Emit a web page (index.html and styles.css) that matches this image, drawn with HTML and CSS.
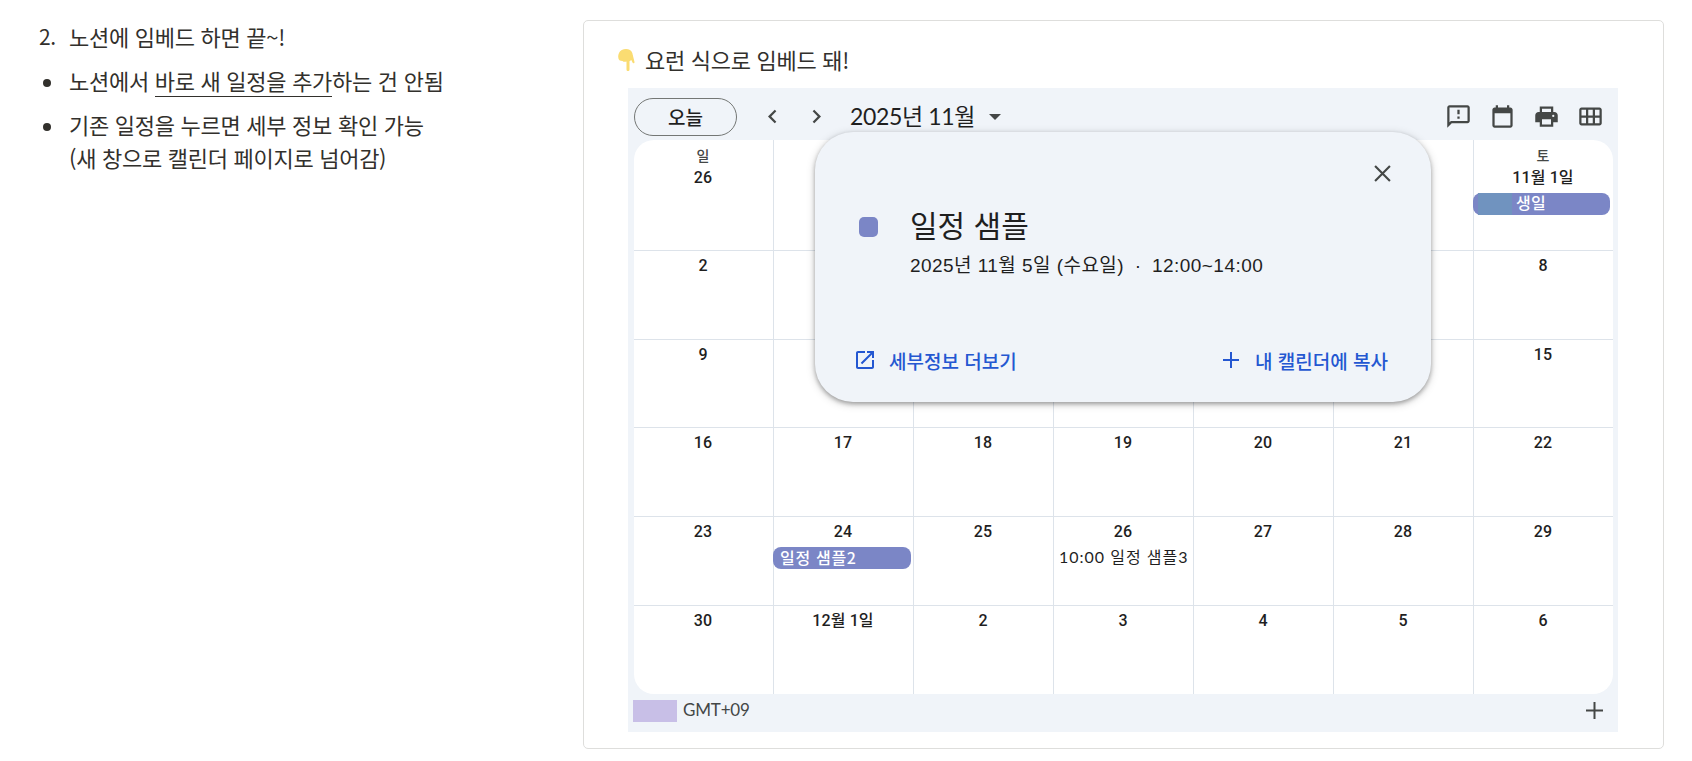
FILE: index.html
```html
<!DOCTYPE html>
<html lang="ko">
<head>
    <meta charset="UTF-8">
    <title>캘린더 임베드</title>
    <link rel="stylesheet" href="styles.css">
</head>
<body>
    <div class="notes">
        <div class="note"><span class="marker">2.</span><span class="text">노션에 임베드 하면 끝~!</span></div>
        <div class="note"><span class="marker"><i class="dot"></i></span><span class="text">노션에서 <span class="underline">바로 새 일정을 추가</span>하는 건 안됨</span></div>
        <div class="note"><span class="marker"><i class="dot"></i></span><span class="text">기존 일정을 누르면 세부 정보 확인 가능<br>(새 창으로 캘린더 페이지로 넘어감)</span></div>
    </div>

    <div class="card">
        <div class="callout">
            <svg class="hand" viewBox="0 0 17 22"><path fill="#fadc72" d="M1 4C2 1.500 5 0 8 0s5.500 1.500 6.300 4l2.200 9c.2 1.200-1.500 1.600-2 .5L13.300 11l-1.800 1.300v8.200c0 2-3 2-3 0v-8C7 13 5.500 13 4.500 12 2 12 .3 11 .3 8.500 0 7 .3 5.500 1 4z"/></svg>
            <span class="callout-text">요런 식으로 임베드 돼!</span>
        </div>

        <div class="calendar">
            <div class="toolbar">
                <button class="today">오늘</button>
                <svg class="arrow prev" viewBox="0 0 24 24"><path d="M15.410 7.410L14 6l-6 6 6 6 1.410-1.410L10.830 12z"/></svg>
                <svg class="arrow next" viewBox="0 0 24 24"><path d="M10 6L8.590 7.410 13.170 12l-4.580 4.590L10 18l6-6z"/></svg>
                <span class="month">2025년 11월</span>
                <svg class="caret" viewBox="0 0 12 6"><path d="M0 0h12L6 6z"/></svg>
                <div class="tools">
                    <svg viewBox="0 0 24 24"><path d="M20 2H4c-1.100 0-1.990.9-1.990 2L2 22l4-4h14c1.100 0 2-.9 2-2V4c0-1.100-.9-2-2-2zm0 14H5.170l-.59.59-.58.58V4h16v12zm-9-4h2v2h-2zm0-6h2v4h-2z"/></svg>
                    <svg viewBox="0 0 24 24"><path d="M19 4h-1V2h-2v2H8V2H6v2H5c-1.100 0-2 .9-2 2v14c0 1.100.9 2 2 2h14c1.100 0 2-.9 2-2V6c0-1.100-.9-2-2-2zm0 16H5V9h14v11z"/></svg>
                    <svg viewBox="0 0 24 24"><path fill-rule="evenodd" d="M6 3h12v5h1c1.660 0 3 1.340 3 3v6h-4v4H6v-4H2v-6c0-1.660 1.340-3 3-3h1V3zm2 2v3h8V5H8zm0 9.500V19h8v-4.500H8zM18 10.500a1 1 0 1 0 0 2 1 1 0 0 0 0-2z"/></svg>
                    <svg viewBox="0 0 24 24"><path d="M20 4H4c-1.100 0-2 .9-2 2v12c0 1.100.9 2 2 2h16c1.100 0 2-.9 2-2V6c0-1.100-.9-2-2-2zM8 11H4V6h4v5zm6 0h-4V6h4v5zm6 0h-4V6h4v5zM8 18H4v-5h4v5zm6 0h-4v-5h4v5zm6 0h-4v-5h4v5z"/></svg>
                </div>
            </div>

            <div class="month-grid">
                <div class="day"><span class="weekday">일</span><span class="date">26</span></div>
                <div class="day"></div>
                <div class="day"></div>
                <div class="day"></div>
                <div class="day"></div>
                <div class="day"></div>
                <div class="day"><span class="weekday">토</span><span class="date">11월 1일</span><div class="event birthday"><i class="mask"></i>생일</div></div>

                <div class="day"><span class="date">2</span></div>
                <div class="day"></div>
                <div class="day"></div>
                <div class="day"></div>
                <div class="day"></div>
                <div class="day"></div>
                <div class="day"><span class="date">8</span></div>

                <div class="day"><span class="date">9</span></div>
                <div class="day"></div>
                <div class="day"></div>
                <div class="day"></div>
                <div class="day"></div>
                <div class="day"></div>
                <div class="day"><span class="date">15</span></div>

                <div class="day"><span class="date">16</span></div>
                <div class="day"><span class="date">17</span></div>
                <div class="day"><span class="date">18</span></div>
                <div class="day"><span class="date">19</span></div>
                <div class="day"><span class="date">20</span></div>
                <div class="day"><span class="date">21</span></div>
                <div class="day"><span class="date">22</span></div>

                <div class="day"><span class="date">23</span></div>
                <div class="day"><span class="date">24</span><div class="event">일정 샘플2</div></div>
                <div class="day"><span class="date">25</span></div>
                <div class="day"><span class="date">26</span><div class="event timed">10:00 일정 샘플3</div></div>
                <div class="day"><span class="date">27</span></div>
                <div class="day"><span class="date">28</span></div>
                <div class="day"><span class="date">29</span></div>

                <div class="day"><span class="date">30</span></div>
                <div class="day"><span class="date">12월 1일</span></div>
                <div class="day"><span class="date">2</span></div>
                <div class="day"><span class="date">3</span></div>
                <div class="day"><span class="date">4</span></div>
                <div class="day"><span class="date">5</span></div>
                <div class="day"><span class="date">6</span></div>
            </div>

            <div class="footer">
                <i class="zone-box"></i>
                <span class="zone">GMT+09</span>
                <svg class="add" viewBox="0 0 17 17"><path d="M7.500 0h2v7.500H17v2H9.500V17h-2V9.500H0v-2h7.500z"/></svg>
            </div>

            <div class="popup">
                <svg class="close" viewBox="0 0 16 16"><path d="M1 1l14 14M15 1L1 15"/></svg>
                <div class="popup-head">
                    <i class="color"></i>
                    <span class="title">일정 샘플</span>
                </div>
                <div class="when"><span>2025년 11월 5일 (수요일)</span><span class="sep">·</span><span>12:00~14:00</span></div>
                <div class="actions">
                    <a class="action"><svg class="open" viewBox="0 0 18 18"><path d="M16 16H2V2h7V0H2C.890 0 0 .9 0 2v14c0 1.100.890 2 2 2h14c1.100 0 2-.9 2-2V9h-2v7zM11 0v2h3.590l-9.830 9.830 1.410 1.410L16 3.410V7h2V0h-7z"/></svg><span>세부정보 더보기</span></a>
                    <a class="action"><svg class="plus" viewBox="0 0 16 16"><path d="M7 0h2v7h7v2H9v7H7V9H0V7h7z"/></svg><span>내 캘린더에 복사</span></a>
                </div>
            </div>
        </div>
    </div>
</body>
</html>
```
FILE: styles.css
```css
* {
    box-sizing: border-box;
}

body {
    display: flex;
    align-items: flex-start;
    margin: 0;
    height: 761px;
    overflow: hidden;
    background: #fff;
    color: #32302c;
    font-family: "Noto Sans CJK KR", sans-serif;
}

svg {
    display: block;
    flex: none;
}

/* left column */
.notes {
    width: 583px;
    padding: 20px 0 0 39px;
    font-size: 22px;
    letter-spacing: -0.28px;
    line-height: 33px;
}

.note {
    display: flex;
    margin-bottom: 11px;
}

.marker {
    width: 30px;
    height: 33px;
    font-size: 21px;
    display: flex;
    align-items: center;
}

.dot {
    width: 8px;
    height: 8px;
    margin: 4px 0 0 4px;
    border-radius: 50%;
    background: #32302c;
}

.text {
    white-space: nowrap;
}

.underline {
    border-bottom: 1px solid #32302c;
}

/* right column */
.card {
    width: 1081px;
    height: 729px;
    margin-top: 20px;
    padding: 22px 0 0 34px;
    border: 1px solid #dededc;
    border-radius: 5px;
}

.callout {
    display: flex;
    align-items: center;
    height: 33px;
    margin-bottom: 12px;
    font-size: 22px;
    letter-spacing: -0.28px;
    line-height: 33px;
}

.hand {
    width: 17px;
    height: 22px;
    margin: 1px 10px 0 0;
}

.calendar {
    position: relative;
    width: 990px;
    height: 644px;
    margin-left: 10px;
    padding: 0 5px 0 6px;
    background: #f0f4f9;
    color: #1f1f1f;
}

.toolbar {
    display: flex;
    align-items: center;
    height: 52px;
    padding-top: 5px;
    fill: #444746;
}

.today {
    width: 103px;
    height: 38px;
    padding: 0;
    border: 1px solid #747775;
    border-radius: 19px;
    background: none;
    color: #1f1f1f;
    font-family: inherit;
    font-size: 19px;
    font-weight: 500;
    line-height: 34px;
}

.arrow {
    width: 27px;
    height: 27px;
}

.prev {
    margin-left: 22px;
}

.next {
    margin-left: 17px;
}

.month {
    width: 125px;
    margin: 0 0 2px 20px;
    font-family: Lato, "Noto Sans CJK KR", sans-serif;
    font-size: 23px;
    letter-spacing: -0.35px;
    line-height: 36px;
    white-space: nowrap;
}

.caret {
    width: 12px;
    height: 6px;
    margin-left: 14px;
}

.tools {
    display: flex;
    gap: 17px;
    margin: 0 9px 0 auto;
}

.tools svg {
    width: 27px;
    height: 27px;
}

.month-grid {
    display: grid;
    grid-template-columns: 139px repeat(6, 140px);
    grid-template-rows: 110px 89px 88px 89px 89px 89px;
    height: 554px;
    overflow: hidden;
    border-radius: 20px;
    background: #fff;
}

.day {
    display: flex;
    flex-direction: column;
    align-items: center;
    padding: 2px 1px 0 0;
    border-top: 1px solid #dde3ea;
    border-left: 1px solid #dde3ea;
}

.day:nth-child(-n+7) {
    padding-top: 5px;
    border-top: 0;
}

.day:nth-child(7n+1) {
    border-left: 0;
}

.weekday {
    height: 20px;
    color: #444746;
    font-size: 14px;
    font-weight: 500;
    line-height: 20px;
}

.date {
    height: 24px;
    font-family: Roboto, "Noto Sans CJK KR", sans-serif;
    font-size: 16px;
    font-weight: 500;
    letter-spacing: 0.1px;
    line-height: 26px;
    white-space: nowrap;
}

.event {
    display: flex;
    align-self: flex-start;
    width: 138px;
    height: 22px;
    margin: 4px 0 0 -1px;
    padding-left: 7px;
    border-radius: 8px;
    background: #7b86c6;
    color: #fff;
    font-size: 16px;
    font-weight: 500;
    letter-spacing: 0.7px;
    line-height: 20px;
    white-space: nowrap;
}

.birthday {
    width: 137px;
    padding-left: 5px;
    letter-spacing: 0.3px;
    line-height: 19px;
}

.mask {
    width: 34px;
    height: 22px;
    margin-right: 4px;
    background: #7093bf;
}

.timed {
    padding-left: 6px;
    background: none;
    color: #1f1f1f;
    font-family: Lato, "Noto Sans CJK KR", sans-serif;
    font-weight: 400;
    letter-spacing: 1px;
}

.footer {
    display: flex;
    align-items: center;
    height: 33px;
    color: #444746;
    fill: #444746;
}

.zone-box {
    width: 44px;
    height: 22px;
    margin: 0 6px 0 -1px;
    background: #c8bfe7;
}

.zone {
    margin-bottom: 3px;
    font-family: Lato, sans-serif;
    font-size: 17px;
    letter-spacing: -0.2px;
}

.add {
    width: 17px;
    height: 17px;
    margin: 0 10px 0 auto;
}

/* event details popup */
.popup {
    position: absolute;
    left: 187px;
    top: 44px;
    width: 616px;
    height: 270px;
    padding: 33px 43px 0 41px;
    border-radius: 38px;
    background: #f0f4f9;
    box-shadow: 0 2px 4px rgba(0, 0, 0, .3), 0 2px 8px 1px rgba(0, 0, 0, .15);
}

.close {
    width: 17px;
    height: 17px;
    margin: 0 -3px 0 auto;
    fill: none;
    stroke: #444746;
    stroke-width: 2;
}

.popup-head {
    display: flex;
    align-items: center;
    height: 44px;
    margin-top: 23px;
    padding-left: 3px;
}

.color {
    width: 19px;
    height: 20px;
    margin-right: 32px;
    border-radius: 5px;
    background: #7b86c6;
}

.title {
    margin-bottom: 6px;
    font-size: 30px;
    line-height: 44px;
}

.when {
    display: flex;
    margin: 3px 0 0 54px;
    font-family: "Liberation Sans", "Noto Sans CJK KR", sans-serif;
    font-size: 19px;
    letter-spacing: 0.45px;
    line-height: 28px;
    white-space: nowrap;
}

.sep {
    width: 28px;
    text-align: center;
}

.actions {
    display: flex;
    justify-content: space-between;
    margin-top: 66px;
    color: #2457d1;
    fill: #2457d1;
    font-size: 19px;
    font-weight: 500;
    line-height: 30px;
    white-space: nowrap;
}

.action {
    display: flex;
    align-items: center;
}

.open {
    width: 18px;
    height: 18px;
    margin: 0 15px 3px 0;
}

.plus {
    width: 16px;
    height: 16px;
    margin: 0 16px 3px 0;
}
```
